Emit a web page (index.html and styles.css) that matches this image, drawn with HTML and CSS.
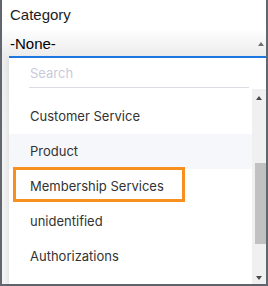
FILE: index.html
```html
<!DOCTYPE html>
<html lang="en">
<head>
  <meta charset="UTF-8">
  <title>Category</title>
  <link rel="stylesheet" href="styles.css">
</head>
<body>
  <div class="frame">
    <div class="field-label">Category</div>
    <div class="select">
      <span class="select-value">-None-</span>
      <span class="arrow-up small"></span>
    </div>

    <div class="dropdown">
      <div class="search-row">
        <div class="search-input">Search</div>
      </div>
      <div class="list-wrap">
        <ul class="options">
          <li class="option">Customer Service</li>
          <li class="option hover">Product</li>
          <li class="option marked">Membership Services<span class="highlight"></span></li>
          <li class="option">unidentified</li>
          <li class="option">Authorizations</li>
        </ul>
        <div class="scrollbar">
          <span class="arrow-up"></span>
          <div class="thumb"></div>
          <span class="arrow-down"></span>
        </div>
      </div>
    </div>
  </div>
</body>
</html>
```

FILE: styles.css
```css
* {
  margin: 0;
  padding: 0;
  box-sizing: border-box;
}

body {
  width: 268px;
  height: 286px;
  overflow: hidden;
  font-family: "Liberation Sans", Arial, sans-serif;
}

.frame {
  height: 286px;
  border: 2px solid #62666f;
  border-top: none;
  background: linear-gradient(#fff 0, #fff 28px, #ececec 56px, #f1f1f1 120px, #f3f3f3 100%);
  display: flex;
  flex-direction: column;
}

.field-label {
  height: 30px;
  line-height: 30px;
  padding-left: 8px;
  font-size: 15px;
  color: #1d1d1d;
}

.select {
  height: 26px;
  display: flex;
  align-items: center;
  justify-content: space-between;
  padding: 0 2px 0 8px;
  font-size: 15px;
  color: #000;
}

.arrow-up, .arrow-down {
  width: 0;
  height: 0;
  border-left: 3.5px solid transparent;
  border-right: 3.5px solid transparent;
}

.arrow-up {
  border-bottom: 4px solid #4a4a4a;
}

.arrow-down {
  border-top: 4px solid #4a4a4a;
}

.arrow-up.small {
  border-bottom-color: #6f6f6f;
  margin-top: 1px;
}

.dropdown {
  flex: 1;
  margin-left: 7px;
  background: #fff;
  border-top: 2px solid #1b76e2;
  box-shadow: -2px 2px 4px rgba(0, 0, 0, 0.06);
  display: flex;
  flex-direction: column;
  min-height: 0;
}

.search-row {
  height: 31px;
  padding: 0 17px 0 20px;
}

.search-input {
  height: 30px;
  line-height: 30px;
  border-bottom: 1px solid #d9dce3;
  padding-left: 1px;
  font-family: Inter, sans-serif;
  font-size: 13px;
  color: #c9cbd9;
}

.list-wrap {
  flex: 1;
  display: flex;
  min-height: 0;
  overflow: hidden;
}

.options {
  flex: 1;
  list-style: none;
  padding-top: 10px;
}

.option {
  position: relative;
  height: 35px;
  line-height: 35px;
  padding-left: 21px;
  font-family: Inter, sans-serif;
  font-size: 13px;
  color: #333;
}

.option.hover {
  background: #f5f7fb;
}

.highlight {
  position: absolute;
  left: 4px;
  top: -2px;
  width: 172px;
  height: 35px;
  border: 3px solid #f7901e;
}

.scrollbar {
  width: 14px;
  background: #f0f0f0;
  display: flex;
  flex-direction: column;
  align-items: center;
  padding: 7px 0 4px;
}

.scrollbar .thumb {
  width: 11px;
  height: 81px;
  margin: 63px 0 0 3px;
  background: #c1c1c1;
}

.scrollbar .arrow-down {
  margin-top: auto;
}
```
